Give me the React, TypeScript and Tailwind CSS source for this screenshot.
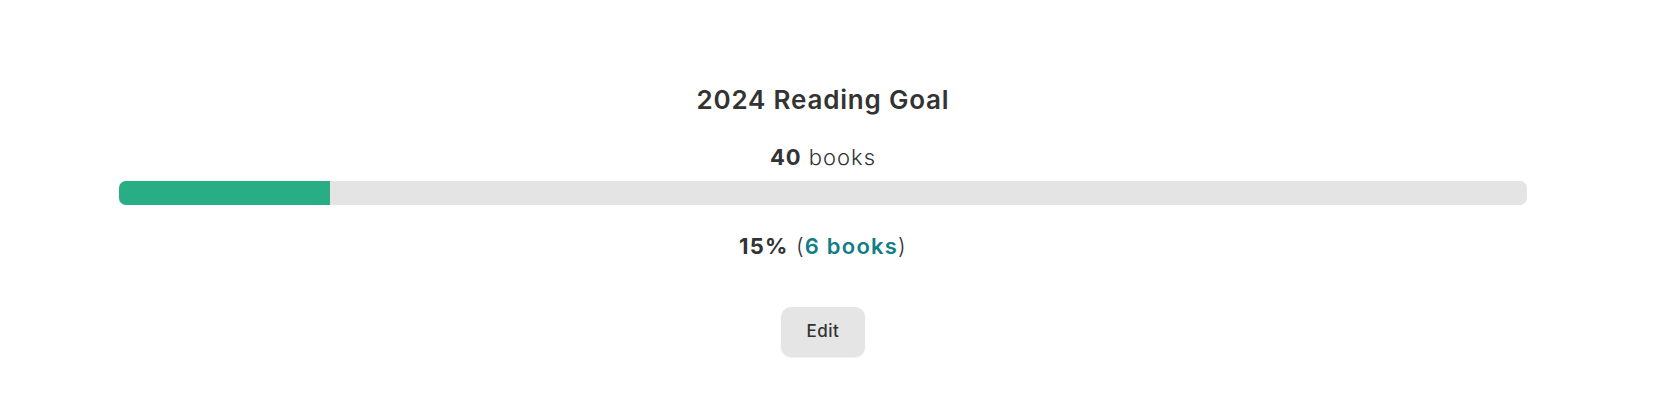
import React from "react";

export default function App() {
  const pct = 15;
  return (
    <div
      className="w-[1672px] h-[414px] bg-white text-[#333333]"
      style={{ fontFamily: "Inter, 'Noto Sans', sans-serif" }}
    >
      <div className="ml-[119px] w-[1408px] pt-[84px] flex flex-col items-center">
        <h2 className="text-[26px] leading-[32px] font-semibold tracking-[0.8px]">2024 Reading Goal</h2>
        <div className="mt-[27px] text-[22px] leading-[28px] tracking-[1px]">
          <span className="font-bold">40</span> <span className="font-light">books</span>
        </div>
        <div className="mt-[10px] w-full h-[24px] rounded-[7px] bg-[#e4e4e4] overflow-hidden">
          <div className="h-full bg-[#28ad84]" style={{ width: `${pct}%` }} />
        </div>
        <div className="mt-[27px] text-[22px] leading-[28px] tracking-[1.2px]">
          <span className="font-bold">15%</span> <span className="font-light">(</span>
          <span className="font-semibold text-[#137e86]">6 books</span>
          <span className="font-light">)</span>
        </div>
        <button className="mt-[47px] w-[84px] h-[50px] rounded-[10px] bg-[#e5e5e5] text-[17px] tracking-[0.5px] font-medium text-[#333333] shadow-[0_1px_2px_rgba(0,0,0,0.06)]">
          Edit
        </button>
      </div>
    </div>
  );
}
